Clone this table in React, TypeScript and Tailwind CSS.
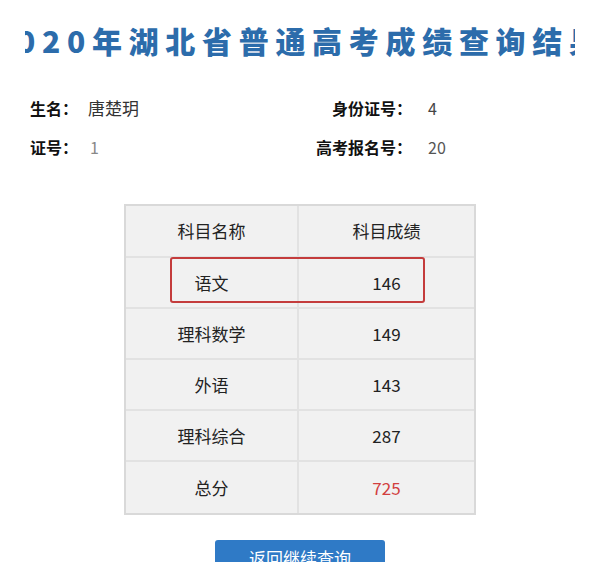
const scores = [
  { name: '语文', score: '146' },
  { name: '理科数学', score: '149' },
  { name: '外语', score: '143' },
  { name: '理科综合', score: '287' },
  { name: '总分', score: '725', total: true },
]

export default function App() {
  return (
    <div className="relative w-[593px] h-[562px] overflow-hidden bg-white font-['Noto_Sans_CJK_SC',sans-serif] text-[#222]">
      {/* 标题，左右被截断 */}
      <div className="ml-[25px] mr-[18px] pt-[22px] overflow-hidden">
        <h1 className="-ml-[33px] whitespace-nowrap text-[30px] leading-[36px] font-black tracking-[6.7px] text-[#2c6cab]">
          2020年湖北省普通高考成绩查询结果
        </h1>
      </div>

      {/* 考生信息 */}
      <div className="ml-[30px] mt-[38px] text-[16px] leading-[24px]">
        <div className="flex items-center">
          <span className="w-[48px] shrink-0 font-bold text-[#111]">生名：</span>
          <span className="ml-[10px] w-[228px] shrink-0 text-[17px] text-[#333]">唐楚玥</span>
          <span className="w-[96px] shrink-0 text-right font-bold text-[#111]">身份证号：</span>
          <span className="ml-[16px] text-[#444]">4</span>
        </div>
        <div className="mt-[15px] flex items-center">
          <span className="w-[48px] shrink-0 font-bold text-[#111]">证号：</span>
          <span className="ml-[12px] w-[226px] shrink-0 text-[#888]">1</span>
          <span className="w-[96px] shrink-0 text-right font-bold text-[#111]">高考报名号：</span>
          <span className="ml-[16px] text-[#555]">20</span>
        </div>
      </div>

      {/* 成绩表 */}
      <div className="ml-[124px] mt-[45px] w-[352px] border-2 border-[#d9d9d9] bg-[#f1f1f1] text-[17px]">
        <div className="flex h-[52px] items-center border-b-2 border-[#e2e2e2]">
          <div className="flex h-full w-[173px] items-center justify-center border-r-2 border-[#e2e2e2]">科目名称</div>
          <div className="flex-1 text-center">科目成绩</div>
        </div>
        {scores.map((s, i) => (
          <div
            key={s.name}
            className={`flex h-[51px] items-center ${i < scores.length - 1 ? 'border-b-2 border-[#e2e2e2]' : ''}`}
          >
            <div className="flex h-full w-[173px] items-center justify-center border-r-2 border-[#e2e2e2]">{s.name}</div>
            <div className={`flex-1 text-center ${s.total ? 'text-[#d2403f]' : ''}`}>{s.score}</div>
          </div>
        ))}
      </div>

      {/* 红框标注 */}
      <div className="absolute left-[170px] top-[257px] h-[46px] w-[255px] rounded-[3px] border-2 border-[#c43c3c]" />

      <div className="mt-[25px] flex justify-center">
        <button className="ml-[7px] h-[36px] w-[170px] rounded-[3px] bg-[#2f7ac6] text-[17px] text-white">
          返回继续查询
        </button>
      </div>
    </div>
  )
}
